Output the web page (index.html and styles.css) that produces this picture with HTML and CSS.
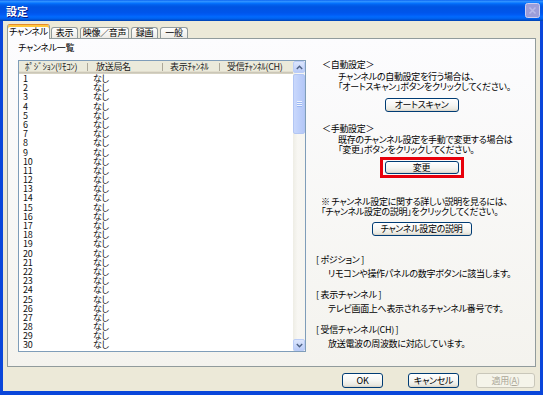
FILE: index.html
```html
<!DOCTYPE html>
<html lang="ja">
<head>
    <meta charset="UTF-8"/>
    <title>設定</title>
    <link rel="stylesheet" href="styles.css">
</head>
<body>

<div class="window">
    <div class="titlebar">
        <span class="title">設定</span>
        <span class="close-btn">
            <svg width="15" height="15" viewBox="0 0 15 15">
                <rect x="0.5" y="0.5" width="14" height="14" rx="2" fill="#9C9DD9" stroke="#CDCEF0"/>
                <path d="M4.5 4.5 L10.5 10.5 M10.5 4.5 L4.5 10.5" stroke="#B9BBE9" stroke-width="1.5"/>
            </svg>
        </span>
    </div>

    <div class="frame">
        <div class="tabs">
            <div class="tab active w-ch">チャンネル</div>
            <div class="tab w-disp">表示</div>
            <div class="tab w-av">映像／音声</div>
            <div class="tab w-rec">録画</div>
            <div class="tab w-gen">一般</div>
        </div>

        <div class="pane">
            <div class="list-col">
                <div class="caption">チャンネル一覧</div>
                <div class="listbox">
                    <div class="list-main">
                        <div class="list-head">
                            <div class="hcell h-pos">ﾎﾟｼﾞｼｮﾝ(ﾘﾓｺﾝ)</div>
                            <div class="hcell h-name">放送局名</div>
                            <div class="hcell h-disp">表示ﾁｬﾝﾈﾙ</div>
                            <div class="hcell h-recv">受信ﾁｬﾝﾈﾙ(CH)</div>
                        </div>
                        <div class="rows">
                            <div class="row"><span class="c-pos">1</span><span class="c-name">なし</span></div>
                            <div class="row"><span class="c-pos">2</span><span class="c-name">なし</span></div>
                            <div class="row"><span class="c-pos">3</span><span class="c-name">なし</span></div>
                            <div class="row"><span class="c-pos">4</span><span class="c-name">なし</span></div>
                            <div class="row"><span class="c-pos">5</span><span class="c-name">なし</span></div>
                            <div class="row"><span class="c-pos">6</span><span class="c-name">なし</span></div>
                            <div class="row"><span class="c-pos">7</span><span class="c-name">なし</span></div>
                            <div class="row"><span class="c-pos">8</span><span class="c-name">なし</span></div>
                            <div class="row"><span class="c-pos">9</span><span class="c-name">なし</span></div>
                            <div class="row"><span class="c-pos">10</span><span class="c-name">なし</span></div>
                            <div class="row"><span class="c-pos">11</span><span class="c-name">なし</span></div>
                            <div class="row"><span class="c-pos">12</span><span class="c-name">なし</span></div>
                            <div class="row"><span class="c-pos">13</span><span class="c-name">なし</span></div>
                            <div class="row"><span class="c-pos">14</span><span class="c-name">なし</span></div>
                            <div class="row"><span class="c-pos">15</span><span class="c-name">なし</span></div>
                            <div class="row"><span class="c-pos">16</span><span class="c-name">なし</span></div>
                            <div class="row"><span class="c-pos">17</span><span class="c-name">なし</span></div>
                            <div class="row"><span class="c-pos">18</span><span class="c-name">なし</span></div>
                            <div class="row"><span class="c-pos">19</span><span class="c-name">なし</span></div>
                            <div class="row"><span class="c-pos">20</span><span class="c-name">なし</span></div>
                            <div class="row"><span class="c-pos">21</span><span class="c-name">なし</span></div>
                            <div class="row"><span class="c-pos">22</span><span class="c-name">なし</span></div>
                            <div class="row"><span class="c-pos">23</span><span class="c-name">なし</span></div>
                            <div class="row"><span class="c-pos">24</span><span class="c-name">なし</span></div>
                            <div class="row"><span class="c-pos">25</span><span class="c-name">なし</span></div>
                            <div class="row"><span class="c-pos">26</span><span class="c-name">なし</span></div>
                            <div class="row"><span class="c-pos">27</span><span class="c-name">なし</span></div>
                            <div class="row"><span class="c-pos">28</span><span class="c-name">なし</span></div>
                            <div class="row"><span class="c-pos">29</span><span class="c-name">なし</span></div>
                            <div class="row"><span class="c-pos">30</span><span class="c-name">なし</span></div>
                        </div>
                    </div>
                    <div class="vscroll">
                        <div class="sb-btn">
                            <svg width="7" height="5" viewBox="0 0 7 5"><path d="M0.8 4 L3.5 1.3 L6.2 4" fill="none" stroke="#4D6185" stroke-width="1.4"/></svg>
                        </div>
                        <div class="sb-thumb"><span class="grip"></span></div>
                        <div class="sb-track"></div>
                        <div class="sb-btn">
                            <svg width="7" height="5" viewBox="0 0 7 5"><path d="M0.8 1 L3.5 3.7 L6.2 1" fill="none" stroke="#4D6185" stroke-width="1.4"/></svg>
                        </div>
                    </div>
                </div>
            </div>

            <div class="info-col">
                <div class="sec-title">＜自動設定＞</div>
                <p class="sec-text">チャンネルの自動設定を行う場合は、<br>「オートスキャン」ボタンをクリックしてください。</p>
                <div class="btn-row scan-row"><button class="btn btn-scan">オートスキャン</button></div>

                <div class="sec-title manual">＜手動設定＞</div>
                <p class="sec-text tight">既存のチャンネル設定を手動で変更する場合は<br>「変更」ボタンをクリックしてください。</p>
                <div class="btn-row change-row">
                    <div class="highlight"><button class="btn btn-change">変更</button></div>
                </div>

                <p class="note">※ チャンネル設定に関する詳しい説明を見るには、<br>「チャンネル設定の説明」をクリックしてください。</p>
                <div class="btn-row help-row"><button class="btn btn-help">チャンネル設定の説明</button></div>

                <dl class="terms">
                    <dt>[ ポジション ]</dt>
                    <dd>リモコンや操作パネルの数字ボタンに該当します。</dd>
                    <dt>[ 表示チャンネル ]</dt>
                    <dd>テレビ画面上へ表示されるチャンネル番号です。</dd>
                    <dt>[ 受信チャンネル(CH) ]</dt>
                    <dd>放送電波の周波数に対応しています。</dd>
                </dl>
            </div>
        </div>

        <div class="footer">
            <button class="btn btn-ok">OK</button>
            <button class="btn btn-cancel">キャンセル</button>
            <button class="btn btn-apply" disabled>適用(<u>A</u>)</button>
        </div>
    </div>
</div>

</body>
</html>
```

FILE: styles.css
```css
* {
  box-sizing: border-box;
}
html, body {
  margin: 0;
  padding: 0;
}
body {
  font-family: "Noto Sans CJK JP", "Noto Sans", sans-serif;
  font-size: 9px;
  font-feature-settings: "palt";
  letter-spacing: -0.3px;
  color: #000;
  background: #ECE9D8;
}
.window {
  width: 543px;
  height: 395px;
  display: flex;
  flex-direction: column;
  overflow: hidden;
}

/* title bar */
.titlebar {
  height: 21px;
  flex: none;
  display: flex;
  align-items: center;
  justify-content: space-between;
  padding: 0 3px 0 6px;
  background: linear-gradient(#0058EE 0%, #3593FF 5%, #288EFF 9%, #127DFF 13%, #036FFC 17%, #0262EE 22%, #0057E5 30%, #0054E3 36%, #0055EB 60%, #005BF5 70%, #026AFE 80%, #0062EF 88%, #0052D6 94%, #0040AB 100%);
}
.title {
  color: #fff;
  font-size: 11px;
  font-weight: bold;
  letter-spacing: 0;
  text-shadow: 1px 1px #0A1883;
}
.close-btn {
  display: block;
  width: 15px;
  height: 15px;
}
.close-btn svg {
  display: block;
}

/* window body */
.frame {
  flex: 1;
  display: flex;
  flex-direction: column;
  border: 3px solid #0A46DA;
  border-top: 0;
  border-bottom-width: 4px;
  padding: 3px 4px 0;
  background: #ECE9D8;
}

/* tabs */
.tabs {
  display: flex;
  align-items: flex-end;
  gap: 2px;
  height: 14px;
  position: relative;
  z-index: 1;
}
.tab {
  height: 11px;
  padding: 0;
  border: 1px solid #919B9C;
  border-bottom: 0;
  border-radius: 3px 3px 0 0;
  background: linear-gradient(#FFFFFF, #ECEBE6);
  line-height: 10px;
  text-align: center;
}
.tab.active {
  height: 15px;
  margin-bottom: -1px;
  margin-right: -1px;
  background: #FCFCFE;
  border-top: 1px solid #E68B2C;
  box-shadow: inset 0 2px #FFC83C;
  line-height: 14px;
}
.w-ch { width: 43px; }
.w-disp { width: 27px; }
.w-av { width: 49px; }
.w-rec { width: 27px; }
.w-gen { width: 28px; }

.pane {
  height: 329px;
  display: flex;
  border: 1px solid #919B9C;
  background: linear-gradient(#FCFCFE, #F4F3EE);
  padding: 0 8px 0 10px;
}

/* channel list */
.list-col {
  width: 288px;
  padding-top: 4px;
}
.caption {
  height: 10px;
  line-height: 10px;
  margin-bottom: 7px;
}
.listbox {
  height: 292px;
  display: flex;
  border: 1px solid #7F9DB9;
  background: #fff;
}
.list-main {
  flex: 1;
  overflow: hidden;
}
.list-head {
  display: flex;
  height: 13px;
  background: #EBEADB;
  box-shadow: inset 0 -1px #D6D2C2, inset 0 -2px #CBC7B8, inset 0 -3px #E2DECD;
  color: #222;
}
.hcell {
  position: relative;
  line-height: 12px;
  white-space: nowrap;
  overflow: hidden;
}
.hcell::after {
  content: "";
  position: absolute;
  right: 0;
  top: 2px;
  bottom: 3px;
  width: 1px;
  background: #ACA899;
}
.h-pos { width: 69px; padding-left: 6px; }
.h-name { width: 75px; padding-left: 8px; }
.h-disp { width: 57px; padding-left: 7px; }
.h-recv { flex: 1; padding-left: 7px; }
.h-recv::after { display: none; }

.rows {
  font-size: 9px;
  line-height: 9.2px;
  color: #111;
}
.row {
  display: flex;
  height: 9.2px;
}
.c-pos {
  width: 70px;
  padding-left: 4px;
}
.c-name {
  padding-left: 4px;
}

/* scrollbar */
.vscroll {
  width: 12px;
  display: flex;
  flex-direction: column;
  background: linear-gradient(90deg, #EEEDE5, #F8F7F3 40%, #F6F5F0);
}
.sb-btn {
  height: 12px;
  display: flex;
  align-items: center;
  justify-content: center;
  border: 1px solid #BBCDF7;
  border-radius: 2px;
  background: linear-gradient(#DCE6FD, #B9CBF8);
}
.sb-btn svg {
  display: block;
}
.sb-thumb {
  height: 60px;
  margin-top: 1px;
  display: flex;
  align-items: center;
  justify-content: center;
  border: 1px solid #B2C6F4;
  border-radius: 2px;
  background: linear-gradient(90deg, #C9D8FC, #BCCEFA 60%, #B5C8F7);
}
.grip {
  width: 5px;
  height: 6px;
  background: repeating-linear-gradient(#EEF4FE 0 1px, #9AB6F2 1px 2px);
}
.sb-track {
  flex: 1;
}

/* right side help text */
.info-col {
  width: 211px;
  margin-left: 10px;
  padding-top: 21px;
}
.sec-title {
  line-height: 10px;
  padding-left: 6px;
}
.sec-title.manual {
  margin-top: 12px;
}
.sec-text {
  margin: 2px 0 0;
  padding-left: 22px;
  line-height: 10px;
}
.sec-text.tight {
  margin-top: 1px;
}
.btn-row {
  display: flex;
  justify-content: center;
}
.scan-row {
  margin-top: 6px;
}
.change-row {
  margin-top: 2px;
}
.help-row {
  margin-top: 5px;
}
.highlight {
  display: flex;
  border: 3px solid #E8000B;
  padding: 1px 2px;
}
.note {
  margin: 19px 0 0;
  padding-left: 5px;
  line-height: 10px;
}
.terms {
  margin: 19px 0 0;
}
.terms dt {
  line-height: 10px;
  margin-top: 11px;
}
.terms dt:first-child {
  margin-top: 0;
}
.terms dd {
  margin: 4px 0 0;
  padding-left: 12px;
  line-height: 10px;
}

/* buttons */
.btn {
  font-family: inherit;
  font-size: 9px;
  font-feature-settings: "palt";
  letter-spacing: -0.3px;
  height: 14px;
  padding: 0;
  border: 1px solid #003C74;
  border-radius: 3px;
  background: linear-gradient(#FFFFFF 0%, #F6F6F3 50%, #EAE9E1 85%, #D6D0C5 100%);
  color: #000;
  line-height: 12px;
  cursor: pointer;
}
.btn:disabled {
  border-color: #C9C7BA;
  background: #F5F4EA;
  color: #ACA899;
  cursor: default;
}
.btn-scan { width: 74px; }
.btn-change { width: 74px; height: 13px; }
.btn-help { width: 100px; }

.footer {
  display: flex;
  justify-content: flex-end;
  margin-top: 6px;
  padding-right: 1px;
}
.footer .btn {
  height: 15px;
}
.btn-ok { width: 41px; }
.btn-cancel { width: 51px; margin-left: 25px; }
.btn-apply { width: 59px; margin-left: 17px; }
```
